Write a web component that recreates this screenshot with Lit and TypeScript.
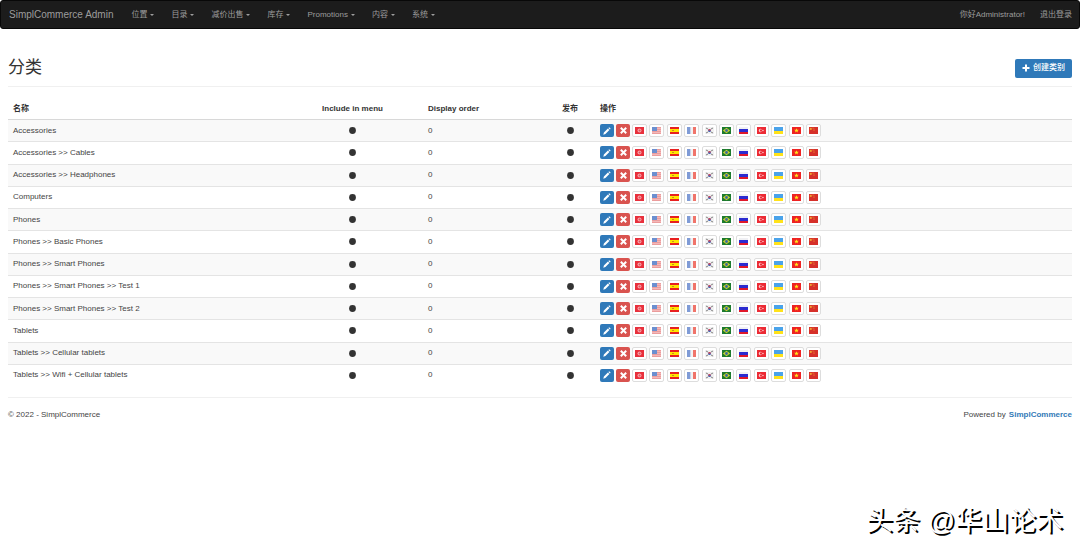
import { LitElement, html, css, svg, TemplateResult } from "lit";
import { customElement } from "lit/decorators.js";

interface Flag {
  name: string;
  art: TemplateResult;
}

const FLAGS: Flag[] = [
  {
    name: "Tunisia",
    art: svg`<rect width="9" height="7" fill="#e8303c"/><circle cx="4.5" cy="3.5" r="2" fill="#f6a8ae"/><circle cx="4.6" cy="3.5" r="1" fill="#e6505a"/>`,
  },
  {
    name: "United States",
    art: svg`<rect width="9" height="7" fill="#f3b8b8"/><path d="M0 .5h9M0 2.5h9M0 4.5h9M0 6.5h9" stroke="#eb9c9c"/><rect width="5" height="4" fill="#6b8fd0"/>`,
  },
  {
    name: "Spain",
    art: svg`<rect width="9" height="7" fill="#e82020"/><rect y="2" width="9" height="3" fill="#ffe600"/><rect x="2" y="3" width="2" height="1" fill="#d08a20"/>`,
  },
  {
    name: "France",
    art: svg`<rect width="9" height="7" fill="#f2f2f2"/><rect width="3" height="7" fill="#7f9bd6"/><rect x="3" width="1" height="7" fill="#c9d4ea"/><rect x="6" width="3" height="7" fill="#f0746a"/>`,
  },
  {
    name: "South Korea",
    art: svg`<rect width="9" height="7" fill="#f1f1f1"/><path d="M1 1l2 1M8 1L6 2M1 6l2-1M8 6L6 5" stroke="#777" stroke-width=".9"/><circle cx="4.5" cy="3.5" r="1.5" fill="#3b62b4"/><path d="M3 3.5a1.5 1.5 0 0 1 3 0z" fill="#e2484f"/>`,
  },
  {
    name: "Brazil",
    art: svg`<rect width="9" height="7" fill="#1d7a2e"/><path d="M4.5.8L8.2 3.5 4.5 6.2.8 3.5z" fill="#c8d030"/><circle cx="4.5" cy="3.5" r="1.4" fill="#3a6aa0"/>`,
  },
  {
    name: "Russia",
    art: svg`<rect width="9" height="7" fill="#f0f0f4"/><rect y="2" width="9" height="3" fill="#2b2bd0"/><rect y="5" width="9" height="2" fill="#e0182a"/>`,
  },
  {
    name: "Turkey",
    art: svg`<rect width="9" height="7" fill="#ec2a34"/><circle cx="3.6" cy="3.5" r="1.8" fill="#fbd8da"/><circle cx="4.1" cy="3.5" r="1.2" fill="#ec2a34"/><circle cx="6" cy="3.5" r=".7" fill="#fbd8da"/>`,
  },
  {
    name: "Ukraine",
    art: svg`<rect width="9" height="7" fill="#4aa3ea"/><rect y="4" width="9" height="3" fill="#ffe21a"/>`,
  },
  {
    name: "Vietnam",
    art: svg`<rect width="9" height="7" fill="#ee2222"/><path d="M4.5 1.2l.6 1.6h1.7L5.5 3.9l.5 1.7-1.5-1-1.5 1 .5-1.7-1.3-1.1h1.7z" fill="#ffe81a"/>`,
  },
  {
    name: "China",
    art: svg`<rect width="9" height="7" fill="#d6302a"/><circle cx="1.8" cy="1.9" r="1.1" fill="#f0a030"/><path d="M4 .6v1M5 1.6v1M5 3v.8" stroke="#eea030" stroke-width=".8"/>`,
  },
];

const MENUS = ["位置", "目录", "减价出售", "库存", "Promotions", "内容", "系统"];

const CATEGORIES = [
  "Accessories",
  "Accessories >> Cables",
  "Accessories >> Headphones",
  "Computers",
  "Phones",
  "Phones >> Basic Phones",
  "Phones >> Smart Phones",
  "Phones >> Smart Phones >> Test 1",
  "Phones >> Smart Phones >> Test 2",
  "Tablets",
  "Tablets >> Cellular tablets",
  "Tablets >> Wifi + Cellular tablets",
].map((name) => ({ name, order: 0 }));

@customElement("app-root")
export class AppRoot extends LitElement {
  static styles = css`
    :host {
      display: block;
      position: relative;
      min-height: 100vh;
      overflow: hidden;
      box-sizing: border-box;
      background: #fff;
      color: #444;
      font-family: "Liberation Sans", "Noto Sans CJK SC", sans-serif;
      font-size: 8px;
      line-height: 12px;
    }
    button {
      font: inherit;
      color: inherit;
      background: none;
      border: 0;
      margin: 0;
      padding: 0;
      cursor: pointer;
    }
    a {
      color: inherit;
      text-decoration: none;
    }
    svg {
      display: block;
    }
    .navbar {
      display: flex;
      align-items: center;
      height: 27px;
      padding: 0 7px 0 8px;
      background: #1c1c1c;
      border: 1px solid #080808;
      border-radius: 3px;
      color: #9d9d9d;
    }
    .brand {
      font-size: 10px;
    }
    .menus {
      display: flex;
      flex: 1;
      gap: 17px;
      margin-left: 18px;
    }
    .menu {
      display: flex;
      align-items: center;
      gap: 3px;
    }
    .caret {
      border: solid transparent;
      border-width: 2px 2px 0;
      border-top-color: #9d9d9d;
    }
    .account {
      display: flex;
      gap: 15px;
    }
    .page {
      padding: 0 8px;
    }
    .heading {
      display: flex;
      align-items: center;
      justify-content: space-between;
      margin-top: 25px;
      padding-bottom: 4px;
      border-bottom: 1px solid #f0f0f0;
    }
    h2 {
      margin: 0;
      font-size: 17px;
      font-weight: 400;
      line-height: 28px;
      color: #333;
    }
    .create {
      display: flex;
      align-items: center;
      gap: 3px;
      height: 19px;
      padding: 0 7px;
      border-radius: 2px;
      background: #2f79b9;
      color: #fff;
      font-weight: 500;
    }
    table {
      width: 100%;
      height: 288px;
      margin-top: 11px;
      table-layout: fixed;
      border-collapse: collapse;
    }
    .col-name {
      width: 274px;
    }
    .col-menu {
      width: 141px;
    }
    .col-order {
      width: 122px;
    }
    .col-published {
      width: 50px;
    }
    th,
    td {
      padding: 0 5px;
      text-align: left;
      vertical-align: middle;
    }
    th {
      height: 21px;
      border-bottom: 1px solid #d8d8d8;
      color: #333;
    }
    td {
      height: 21px;
      border-top: 1px solid #e4e4e4;
    }
    tbody tr:nth-child(odd) {
      background: #f9f9f9;
    }
    .center {
      text-align: center;
    }
    .dot {
      margin: 0 auto;
    }
    .actions {
      display: flex;
      gap: 2px;
    }
    .act {
      display: grid;
      place-items: center;
      width: 14px;
      height: 13px;
      border-radius: 2px;
    }
    .edit {
      background: #2f79b9;
    }
    .delete {
      background: #d9534f;
    }
    .flags {
      display: flex;
      justify-content: space-between;
      width: 189px;
    }
    .flag {
      display: grid;
      place-items: center;
      box-sizing: border-box;
      width: 15px;
      height: 13px;
      border: 1px solid #ddd;
      border-radius: 2px;
      background: #fff;
    }
    footer {
      display: flex;
      justify-content: space-between;
      margin-top: 11px;
      padding-top: 11px;
      border-top: 1px solid #f0f0f0;
    }
    .site {
      margin-left: 1px;
      color: #337ab7;
      font-weight: bold;
    }
    .watermark {
      position: absolute;
      right: 17px;
      bottom: 12px;
      color: #fff;
      font-size: 27px;
      line-height: 36px;
      text-shadow: 2px 2px 0 #000;
    }
  `;

  private row(c: { name: string; order: number }) {
    const dot = svg`<circle cx="3.5" cy="3.5" r="3.4" fill="#333"/>`;
    return html`<tr>
      <td>${c.name}</td>
      <td><svg class="dot" width="7" height="7" role="img" aria-label="Yes">${dot}</svg></td>
      <td>${c.order}</td>
      <td><svg class="dot" width="7" height="7" role="img" aria-label="Yes">${dot}</svg></td>
      <td>
        <div class="actions">
          <button class="act edit" aria-label="Edit">
            <svg width="8" height="8" viewBox="0 0 8 8">
              <path d="M.3 7.7l.6-2.2 4-4 1.5 1.5-4 4zM5.4 1l.8-.8 1.5 1.5-.8.8z" fill="#fff" />
            </svg>
          </button>
          <button class="act delete" aria-label="Delete">
            <svg width="7" height="7" viewBox="0 0 7 7">
              <path d="M.8.8l5.4 5.4M6.2.8L.8 6.2" stroke="#fff" stroke-width="2" />
            </svg>
          </button>
          <div class="flags">
            ${FLAGS.map(
              (f) => html`<button class="flag" aria-label=${f.name}>
                <svg width="9" height="7" viewBox="0 0 9 7">${f.art}</svg>
              </button>`
            )}
          </div>
        </div>
      </td>
    </tr>`;
  }

  render() {
    return html`
      <nav class="navbar">
        <a class="brand" href="#">SimplCommerce Admin</a>
        <div class="menus">
          ${MENUS.map((m) => html`<button class="menu">${m}<span class="caret"></span></button>`)}
        </div>
        <div class="account">
          <a href="#">你好Administrator!</a>
          <button>退出登录</button>
        </div>
      </nav>
      <main class="page">
        <div class="heading">
          <h2>分类</h2>
          <button class="create">
            <svg width="8" height="8" viewBox="0 0 8 8">
              <path d="M4 .5v7M.5 4h7" stroke="#fff" stroke-width="2" />
            </svg>
            创建类别
          </button>
        </div>
        <table>
          <colgroup>
            <col class="col-name" />
            <col class="col-menu" />
            <col class="col-order" />
            <col class="col-published" />
            <col />
          </colgroup>
          <thead>
            <tr>
              <th>名称</th>
              <th class="center">Include in menu</th>
              <th>Display order</th>
              <th class="center">发布</th>
              <th>操作</th>
            </tr>
          </thead>
          <tbody>
            ${CATEGORIES.map((c) => this.row(c))}
          </tbody>
        </table>
        <footer>
          <span>© 2022 - SimplCommerce</span>
          <span>Powered by <a class="site" href="#">SimplCommerce</a></span>
        </footer>
      </main>
      <div class="watermark">头条 @华山论术</div>
    `;
  }
}
